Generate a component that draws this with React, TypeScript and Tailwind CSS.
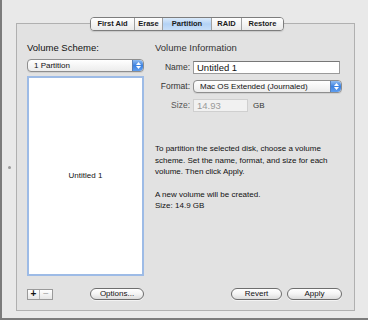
import React from 'react';

const font = "font-['Liberation_Sans',Arial,sans-serif]";

function Stepper() {
  return (
    <div className="w-[11px] self-stretch rounded-r-[4px] bg-gradient-to-b from-[#8fbcf2] via-[#3d82e0] to-[#5f9ef0] flex flex-col items-center justify-center gap-[1px] border-l border-[#5a7fb5]">
      <svg width="5" height="3" viewBox="0 0 5 3"><path d="M0 3 L2.5 0 L5 3 Z" fill="#fff" /></svg>
      <svg width="5" height="3" viewBox="0 0 5 3"><path d="M0 0 L2.5 3 L5 0 Z" fill="#fff" /></svg>
    </div>
  );
}

function Popup({ label, className }: { label: string; className: string }) {
  return (
    <div className={`flex items-stretch rounded-[4px] border border-[#8e8e8e] bg-gradient-to-b from-white to-[#ececec] shadow-[0_1px_0_rgba(0,0,0,0.08)] ${className}`}>
      <span className="flex-1 pl-[6px] text-[8px] leading-[11px] text-[#111] truncate">{label}</span>
      <Stepper />
    </div>
  );
}

function PillButton({ label, className }: { label: string; className: string }) {
  return (
    <button className={`h-[12px] rounded-full border border-[#6e6e6e] bg-gradient-to-b from-white via-[#f4f4f4] to-[#dcdcdc] text-[8px] leading-[10px] text-[#111] shadow-[0_1px_0_rgba(255,255,255,0.6)] ${className}`}>
      {label}
    </button>
  );
}

const tabs = [
  { label: 'First Aid', w: 'w-[43px]' },
  { label: 'Erase', w: 'w-[28px]' },
  { label: 'Partition', w: 'w-[49px]', active: true },
  { label: 'RAID', w: 'w-[30px]' },
  { label: 'Restore', w: 'w-[42px]' },
];

export default function App() {
  return (
    <div className={`${font} w-[368px] h-[320px] bg-[#e9e9e9] border-l-2 border-b-2 border-[#7c7c7c] flex flex-col`}>
      <div className="flex pt-[23px]">
        {/* split handle strip */}
        <div className="w-[14px] flex items-center justify-center">
          <div className="w-[3px] h-[3px] rounded-full bg-[#9a9a9a]" />
        </div>

        {/* group box */}
        <div className="relative w-[339px] h-[288px] border border-[#b0b0b0] bg-[#e2e2e2] flex gap-[11px] pl-[10px] pr-[11px] pt-[18px] pb-[10px]">
          {/* tab bar */}
          <div className="absolute -top-[7px] left-[73px] flex h-[14px] rounded-[4px] border border-[#7d7d7d] overflow-hidden shadow-[0_1px_1px_rgba(0,0,0,0.12)]">
            {tabs.map((t, i) => (
              <div
                key={t.label}
                className={`${t.w} flex items-center justify-center text-[7.5px] font-bold text-[#1a1a1a] ${i > 0 ? 'border-l border-[#a0a0a0]' : ''} ${
                  t.active ? 'bg-gradient-to-b from-[#dcebfb] via-[#b3d2f5] to-[#c7def8]' : 'bg-gradient-to-b from-white to-[#e9e9e9]'
                }`}
              >
                {t.label}
              </div>
            ))}
          </div>

          {/* left column */}
          <div className="w-[117px] flex flex-col">
            <div className="h-[11px] text-[9.5px] leading-[11px] text-[#111]">Volume Scheme:</div>
            <Popup label="1 Partition" className="mt-[6px] h-[13px]" />
            <div className="mt-[4px] flex-1 border-2 border-[#9dbbe6] bg-white flex items-center justify-center">
              <span className="text-[8px] text-[#111]">Untitled 1</span>
            </div>
            <div className="mt-[12px] h-[12px] flex items-center">
              <div className="flex h-[11px] border border-[#9a9a9a] bg-gradient-to-b from-white to-[#e6e6e6]">
                <div className="w-[12px] flex items-center justify-center text-[10px] font-bold leading-none text-[#111] border-r border-[#b5b5b5]">+</div>
                <div className="w-[12px] flex items-center justify-center text-[10px] leading-none text-[#a5a5a5]">−</div>
              </div>
              <PillButton label="Options..." className="ml-auto w-[54px]" />
            </div>
          </div>

          {/* right column */}
          <div className="flex-1 flex flex-col">
            <div className="h-[11px] text-[9.5px] leading-[11px] text-[#333]">Volume Information</div>

            <div className="mt-[8px] flex items-center gap-[3px]">
              <span className="w-[35px] text-right text-[8.5px] text-[#333]">Name:</span>
              <div className="w-[147px] h-[13px] border border-[#9a9a9a] border-t-[#777] bg-white pl-[3px] text-[9.5px] leading-[11px] text-[#111]">Untitled 1</div>
            </div>

            <div className="mt-[6px] flex items-center gap-[3px]">
              <span className="w-[35px] text-right text-[8.5px] text-[#333]">Format:</span>
              <Popup label="Mac OS Extended (Journaled)" className="w-[149px] h-[13px]" />
            </div>

            <div className="mt-[6px] flex items-center gap-[3px]">
              <span className="w-[35px] text-right text-[8.5px] text-[#555]">Size:</span>
              <div className="w-[55px] h-[13px] border border-[#cfcfcf] bg-[#f1f1f1] pl-[3px] text-[9.5px] leading-[11px] text-[#9a9a9a]">14.93</div>
              <span className="ml-[2px] text-[8px] text-[#333]">GB</span>
            </div>

            <p className="mt-[31px] text-[8px] leading-[11.5px] text-[#111]">
              To partition the selected disk, choose a volume scheme. Set the name, format, and size for each volume. Then click Apply.
            </p>
            <p className="mt-[11px] text-[8px] leading-[11.5px] text-[#111]">
              A new volume will be created.
              <br />
              Size: 14.9 GB
            </p>

            <div className="mt-auto flex justify-end gap-[5px] pr-[1px]">
              <PillButton label="Revert" className="w-[51px]" />
              <PillButton label="Apply" className="w-[55px]" />
            </div>
          </div>
        </div>
      </div>
    </div>
  );
}
